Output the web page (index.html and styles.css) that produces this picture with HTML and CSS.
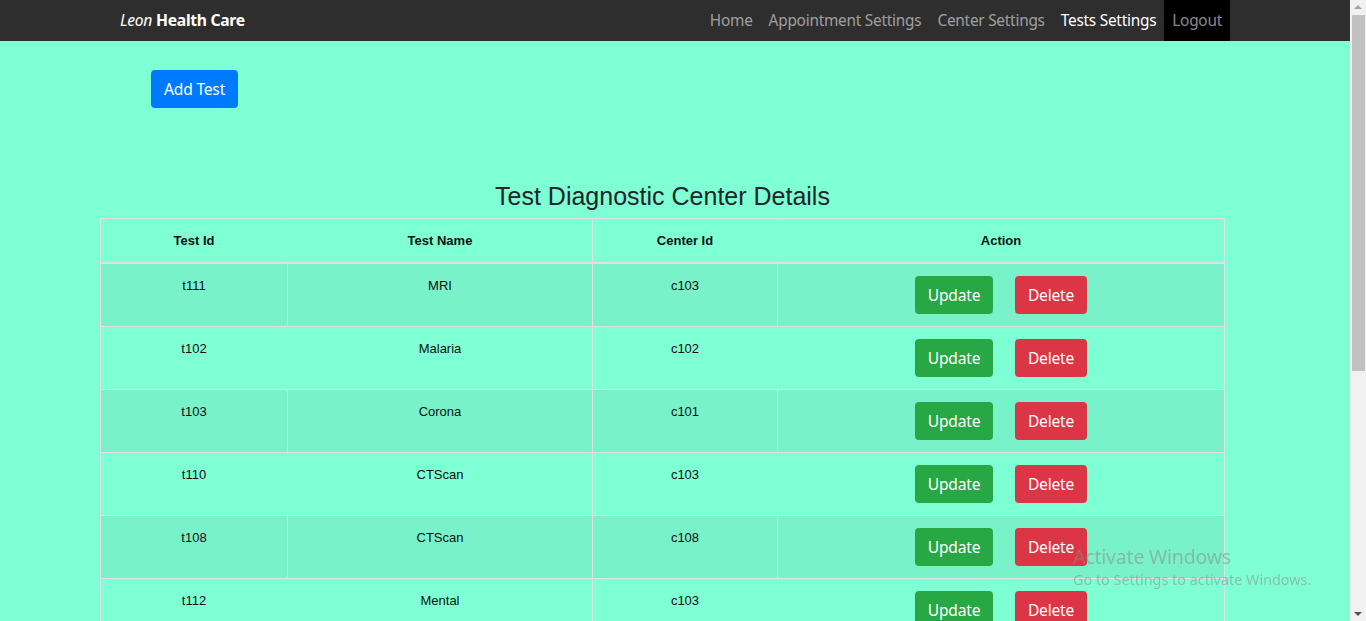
FILE: index.html
```html
<!DOCTYPE html>
<html lang="en">
<head>
<meta charset="utf-8">
<title>Leon Health Care</title>
<link rel="stylesheet" href="styles.css">
</head>
<body>
<div class="app">
  <div class="page">
    <nav class="navbar">
      <div class="nav-inner">
        <a class="brand"><i>Leon</i> <b>Health Care</b></a>
        <ul class="nav-links">
          <li><a class="link">Home</a></li>
          <li><a class="link">Appointment Settings</a></li>
          <li><a class="link">Center Settings</a></li>
          <li><a class="link active">Tests Settings</a></li>
          <li><a class="link logout">Logout</a></li>
        </ul>
      </div>
    </nav>
    <div class="toolbar">
      <button class="btn btn-primary">Add Test</button>
    </div>
    <h2 class="title">Test Diagnostic Center Details</h2>
    <table class="data">
      <thead>
        <tr><th class="c1">Test Id</th><th class="c2">Test Name</th><th class="c3">Center Id</th><th class="c4">Action</th></tr>
      </thead>
      <tbody>
        <tr><td>t111</td><td>MRI</td><td>c103</td><td class="act"><div class="actions"><button class="btn btn-success">Update</button><button class="btn btn-danger">Delete</button></div></td></tr>
        <tr><td>t102</td><td>Malaria</td><td>c102</td><td class="act"><div class="actions"><button class="btn btn-success">Update</button><button class="btn btn-danger">Delete</button></div></td></tr>
        <tr><td>t103</td><td>Corona</td><td>c101</td><td class="act"><div class="actions"><button class="btn btn-success">Update</button><button class="btn btn-danger">Delete</button></div></td></tr>
        <tr><td>t110</td><td>CTScan</td><td>c103</td><td class="act"><div class="actions"><button class="btn btn-success">Update</button><button class="btn btn-danger">Delete</button></div></td></tr>
        <tr><td>t108</td><td>CTScan</td><td>c108</td><td class="act"><div class="actions"><button class="btn btn-success">Update</button><button class="btn btn-danger">Delete</button></div></td></tr>
        <tr><td>t112</td><td>Mental</td><td>c103</td><td class="act"><div class="actions"><button class="btn btn-success">Update</button><button class="btn btn-danger">Delete</button></div></td></tr>
      </tbody>
    </table>
  </div>
  <div class="scrollbar">
    <div class="arrow up"></div>
    <div class="thumb"></div>
    <div class="track-rest"></div>
    <div class="arrow down"></div>
  </div>
</div>
<div class="watermark">
  <div class="wm-title">Activate Windows</div>
  <div class="wm-sub">Go to Settings to activate Windows.</div>
</div>
</body>
</html>
```

FILE: styles.css
```css
html, body {
  margin: 0;
  padding: 0;
  height: 621px;
  overflow: hidden;
}
body {
  background: #7fffd4;
  font-family: "Segoe UI", "Noto Sans", "Open Sans", sans-serif;
  color: #212529;
}
.app {
  display: flex;
  height: 621px;
}
.page {
  flex: 1;
  min-width: 0;
  overflow: hidden;
}
.navbar {
  background: #2e2e2e;
  height: 41px;
}
.nav-inner {
  width: 1110px;
  margin: 0 auto;
  display: flex;
  align-items: stretch;
  justify-content: space-between;
  height: 41px;
}
.brand {
  color: #fff;
  font-size: 15.7px;
  display: flex;
  align-items: center;
  letter-spacing: -0.3px;
  padding-bottom: 1px;
}
.brand b { margin-left: 4px; }
.nav-links {
  list-style: none;
  margin: 0;
  padding: 0;
  display: flex;
}
.nav-links li { display: flex; }
.link {
  display: flex;
  align-items: center;
  padding: 0 8px 1px;
  color: rgba(255,255,255,0.55);
  font-size: 15.4px;
  letter-spacing: -0.25px;
}
.link.active { color: #fff; }
.link.logout { background: #000; }
.toolbar {
  padding: 29px 0 0 151px;
  height: 38px;
}
.btn {
  border: 0;
  border-radius: 4px;
  color: #fff;
  font-family: "Segoe UI", "Noto Sans", "Open Sans", sans-serif;
  font-size: 15.6px;
  letter-spacing: -0.2px;
  height: 38px;
  padding: 0 13px;
  line-height: 38px;
}
.btn-primary { background: #007bff; }
.btn-success { background: #28a745; }
.btn-danger { background: #dc3545; }
.title {
  margin: 74px 0 0 0;
  padding-right: 25px;
  text-align: center;
  font-family: "Liberation Sans", Arial, sans-serif;
  font-weight: normal;
  font-size: 25px;
  line-height: 28px;
  height: 36px;
}
.data {
  margin-left: 100px;
  width: 1125px;
  border-collapse: collapse;
  font-family: "Liberation Sans", Arial, sans-serif;
  font-size: 13px;
  color: #111;
}
.data th, .data td {
  border: 1px solid #dee2e6;
  text-align: center;
  vertical-align: top;
  padding: 12px 12px;
  line-height: 20px;
}
.data th {
  padding: 12px 12px 11px;
  border-bottom: 2px solid #dee2e6;
}
.c1 { width: 162px; }
.c2 { width: 280px; }
.c3 { width: 160px; }
.data td { height: 38px; }
.data td.act { padding: 12px; }
.data tbody tr:nth-child(odd) { background: #79f2c9; }
.actions {
  display: flex;
  justify-content: center;
  gap: 22px;
}
.actions .btn-success { width: 78px; padding: 0; }
.actions .btn-danger { width: 72px; padding: 0; }
.scrollbar {
  width: 16px;
  background: #f1f1f1;
  display: flex;
  flex-direction: column;
  align-items: center;
}
.arrow { width: 0; height: 0; border-left: 4px solid transparent; border-right: 4px solid transparent; }
.arrow.up { border-bottom: 4px solid #a3a3a3; margin: 5px 0 6px; }
.arrow.down { border-top: 4px solid #505050; margin: 6px 0 5px; }
.thumb {
  width: 13px;
  height: 356px;
  background: #c1c1c1;
  margin-left: 1px;
}
.track-rest { flex: 1; }
.watermark {
  position: fixed;
  left: 1073px;
  top: 544px;
  color: rgba(140,140,140,0.55);
  font-family: "Segoe UI", "Noto Sans", "Open Sans", sans-serif;
}
.wm-title { font-size: 19.5px; line-height: 26px; letter-spacing: -0.2px; }
.wm-sub { font-size: 14.4px; line-height: 20px; letter-spacing: 0; }
```
